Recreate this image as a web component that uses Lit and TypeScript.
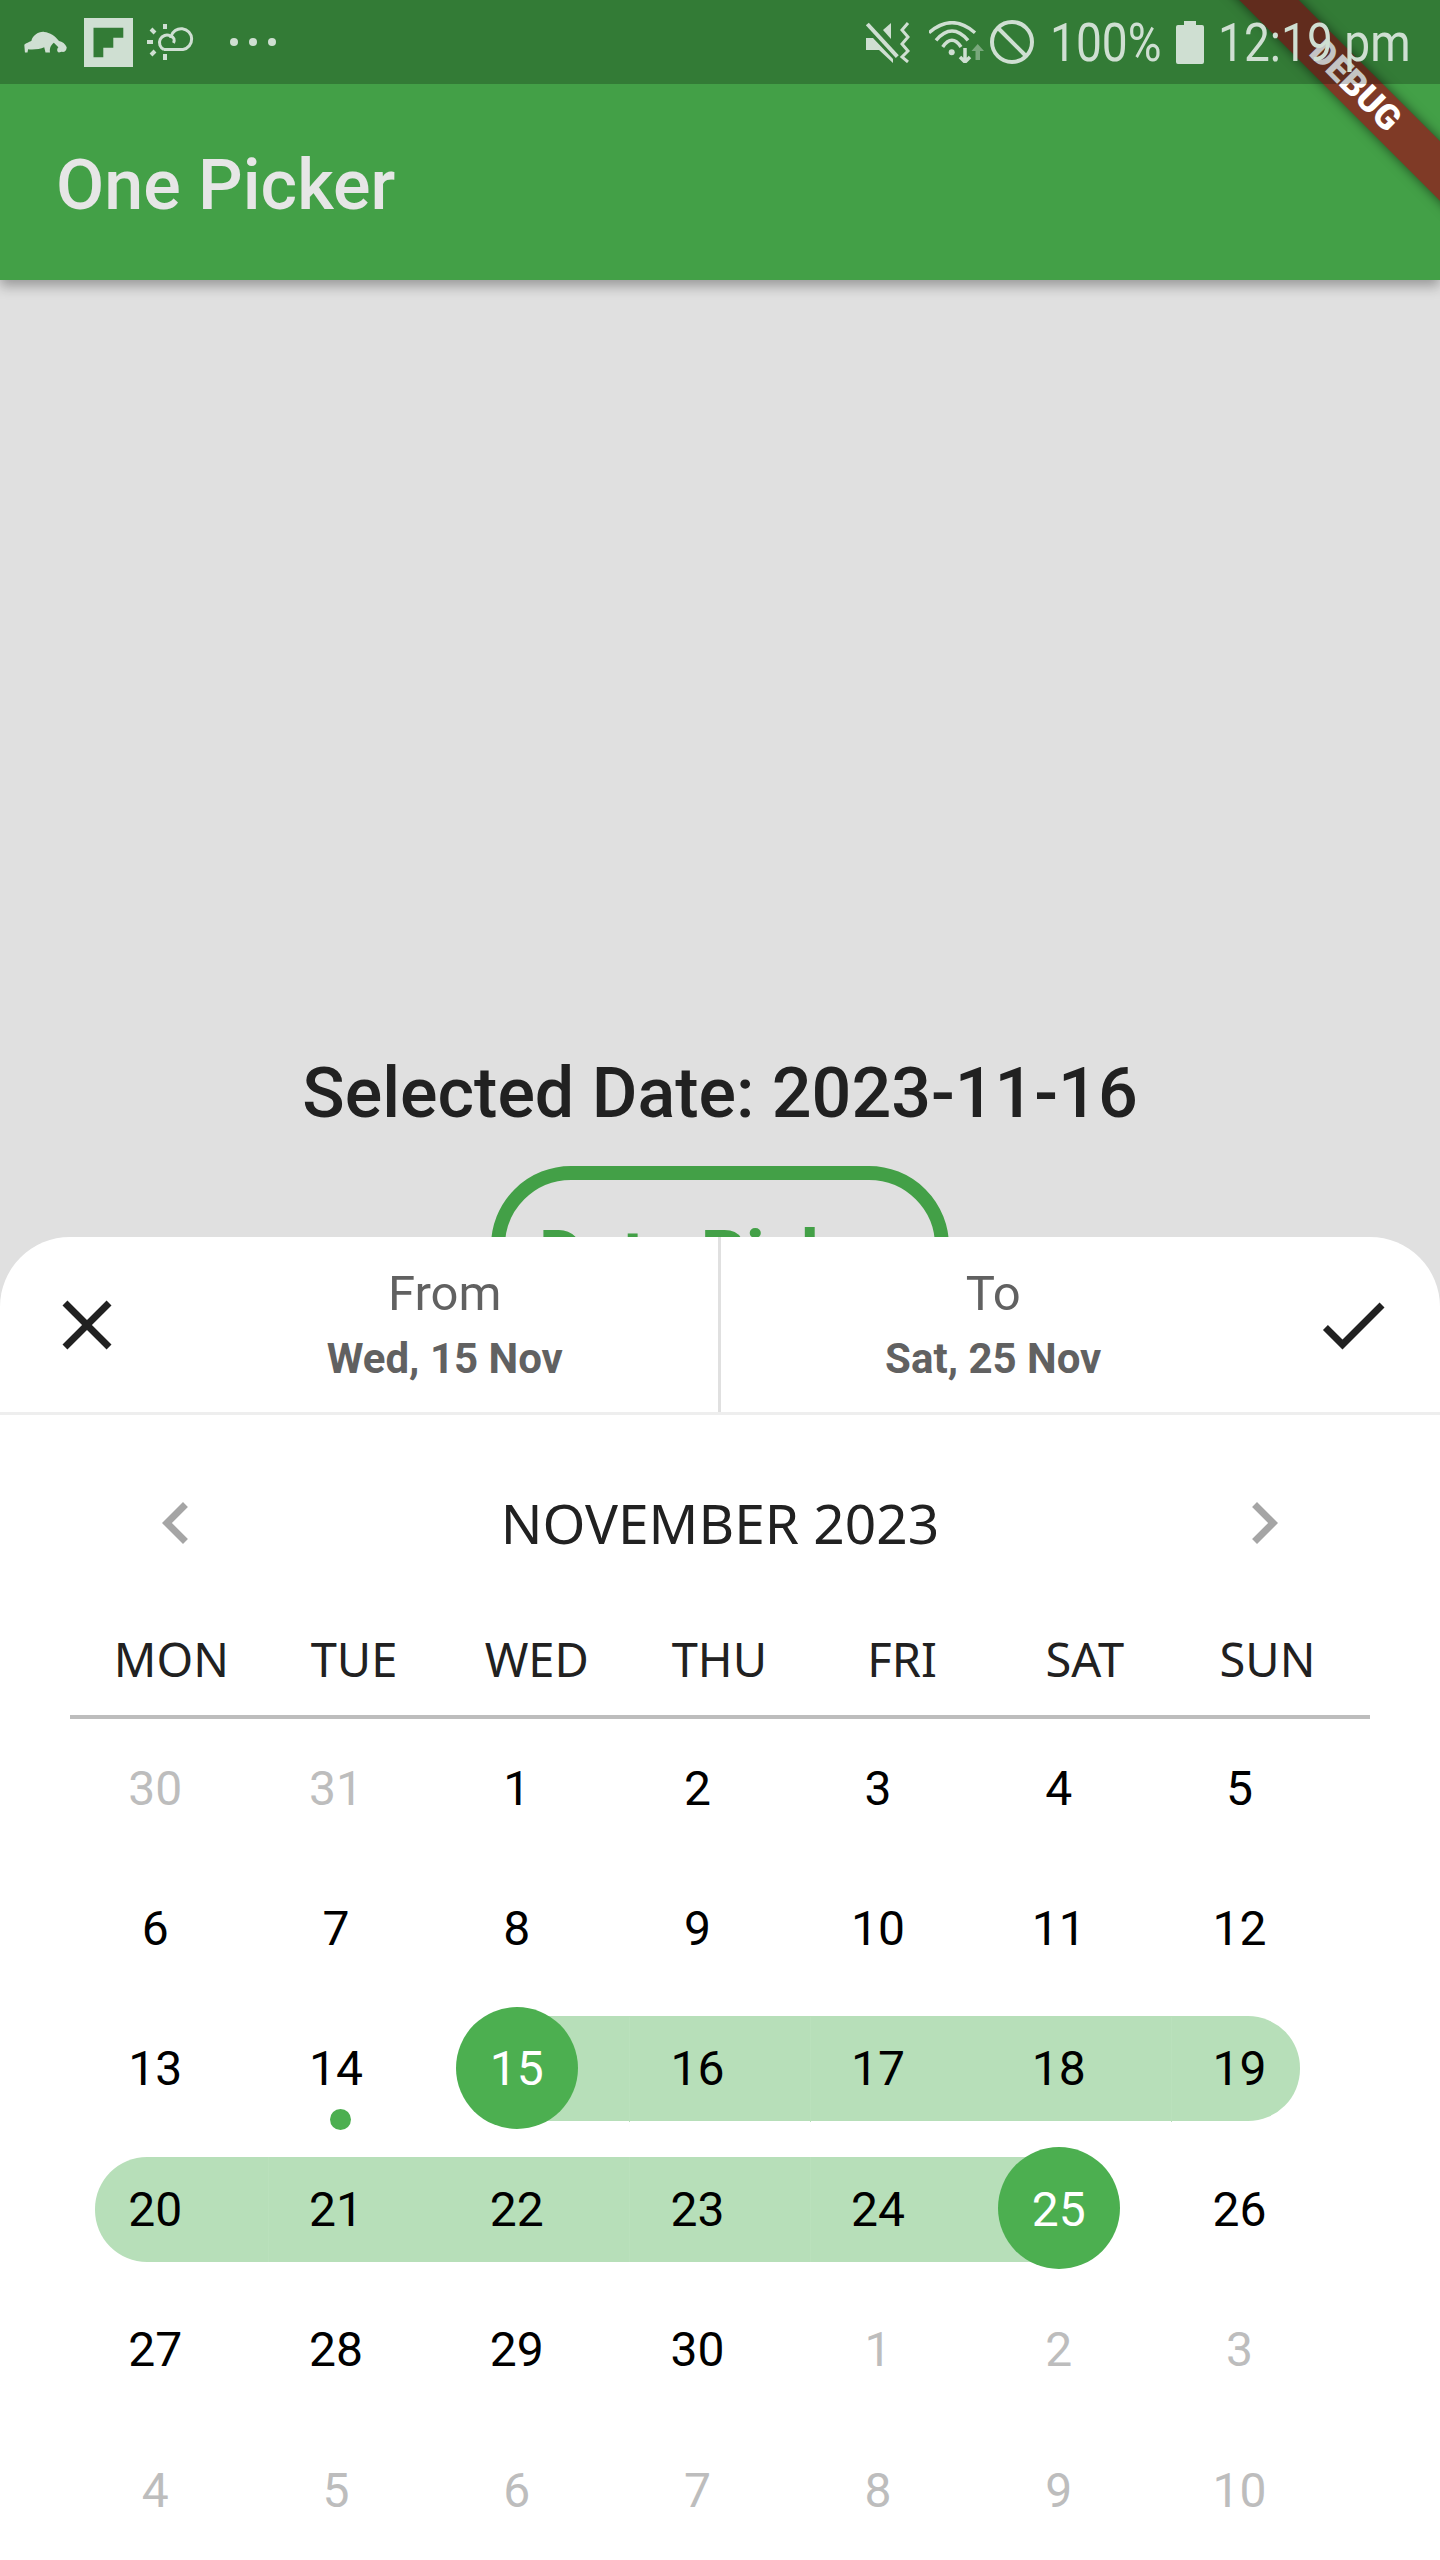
import { LitElement, css, html, svg } from "lit";
import { customElement } from "lit/decorators.js";

type Day = { label: number; muted?: boolean; edge?: boolean; seam?: boolean; dot?: boolean };
type Band = { column: string; cls: string };

const WEEKDAYS = ["MON", "TUE", "WED", "THU", "FRI", "SAT", "SUN"];

const week = (days: number[], muted: (i: number) => boolean = () => false): Day[] =>
  days.map((label, i) => ({ label, muted: muted(i) }));

const WEEKS: { days: Day[]; band?: Band }[] = [
  { days: week([30, 31, 1, 2, 3, 4, 5], (i) => i < 2) },
  { days: week([6, 7, 8, 9, 10, 11, 12]) },
  {
    days: [
      { label: 13 },
      { label: 14, dot: true },
      { label: 15, edge: true },
      { label: 16, seam: true },
      { label: 17, seam: true },
      { label: 18 },
      { label: 19, seam: true },
    ],
    band: { column: "3 / 8", cls: "band start" },
  },
  {
    days: [
      { label: 20 },
      { label: 21, seam: true },
      { label: 22 },
      { label: 23, seam: true },
      { label: 24, seam: true },
      { label: 25, edge: true },
      { label: 26 },
    ],
    band: { column: "1 / 7", cls: "band end" },
  },
  { days: week([27, 28, 29, 30, 1, 2, 3], (i) => i > 3) },
  { days: week([4, 5, 6, 7, 8, 9, 10], () => true) },
];

const icon = (d: string, cls: string) =>
  html`<svg class=${cls} viewBox="0 0 24 24"><path d=${d}></path></svg>`;

@customElement("app-root")
export class AppRoot extends LitElement {
  static styles = css`
    :host {
      display: block;
      position: relative;
      width: 1440px;
      height: 2560px;
      overflow: hidden;
      background: #e0e0e0;
      font-family: Roboto, "Liberation Sans", sans-serif;
    }

    .top {
      background: #43a047;
      box-shadow: 0 6px 12px rgba(0, 0, 0, 0.32);
    }

    .status {
      position: relative;
      z-index: 3;
      display: flex;
      align-items: center;
      height: 84px;
      padding: 0 28px 0 23px;
      box-sizing: border-box;
      background: rgba(0, 0, 0, 0.23);
      color: #cfdfd2;
    }

    .status svg {
      display: block;
      flex: none;
      fill: #cfdfd2;
    }

    .pray { width: 45px; height: 23px; margin: 1px 16px 0 0; }
    .flip { width: 49px; height: 49px; margin: 1px 14px 0 0; }
    .sun { width: 48px; height: 36px; margin: 0 35px 0 0; }
    .more { width: 46px; height: 8px; }
    .mute { width: 45px; height: 41px; margin: 1px 19px 0 auto; }
    .wifi { width: 55px; height: 42px; margin: 0 6px 0 0; }
    .block { width: 44px; height: 44px; margin: 0 16px 0 0; }
    .batt { width: 28px; height: 43px; margin: 0 14px 0 16px; }

    .status-text {
      display: block;
      flex: none;
      padding-top: 2px;
      font-size: 53px;
      line-height: 82px;
      white-space: nowrap;
      transform: scaleX(0.87);
      transform-origin: left center;
    }

    .pct { width: 110px; }
    .time { width: 194px; }

    .toolbar {
      display: flex;
      align-items: center;
      height: 196px;
      padding: 6px 0 0 56px;
      box-sizing: border-box;
      font-size: 70px;
      font-weight: 500;
      color: #e6e6e6;
    }

    .banner {
      position: absolute;
      z-index: 2;
      left: 1155px;
      top: 65px;
      width: 400px;
      height: 42px;
      transform: rotate(45deg);
      background: #7f3a26;
      box-shadow: 0 0 12px rgba(0, 0, 0, 0.55);
      color: #fff;
      font-size: 35px;
      font-weight: 900;
      line-height: 42px;
      text-align: center;
    }

    .content {
      display: flex;
      flex-direction: column;
      align-items: center;
      padding-top: 773px;
    }

    .selected {
      font-size: 70px;
      font-weight: 500;
      line-height: 80px;
      color: #212121;
    }

    .picker {
      display: flex;
      align-items: center;
      justify-content: center;
      box-sizing: border-box;
      width: 458px;
      height: 180px;
      margin-top: 33px;
      border: 14px solid #43a047;
      border-radius: 80px;
      font-size: 70px;
      font-weight: 700;
      color: #43a047;
    }

    .sheet {
      position: absolute;
      z-index: 1;
      left: 0;
      right: 0;
      bottom: 0;
      height: 1323px;
      background: #fff;
      border-radius: 70px 70px 0 0;
    }

    .head {
      display: flex;
      align-items: center;
      height: 178px;
      padding: 0 45px;
      box-sizing: border-box;
      border-bottom: 3px solid #eeeeee;
    }

    .head svg {
      display: block;
      flex: none;
      width: 84px;
      height: 84px;
      fill: #212121;
    }

    .range {
      flex: 1;
      display: flex;
      flex-direction: column;
      align-items: center;
      align-self: stretch;
      margin-right: 45px;
      color: #616161;
    }

    .range.from {
      margin: 0 0 0 43px;
      border-right: 3px solid #e0e0e0;
    }

    .range-label {
      margin-top: 27px;
      font-size: 49px;
      line-height: 60px;
    }

    .range-date {
      margin-top: 8px;
      font-size: 42px;
      font-weight: 700;
      line-height: 54px;
    }

    .nav {
      display: flex;
      align-items: center;
      justify-content: space-between;
      height: 84px;
      margin: 65px 134px 0;
      font-family: "Noto Sans", "Open Sans", sans-serif;
      font-size: 55px;
      color: #212121;
    }

    .nav svg {
      display: block;
      width: 84px;
      height: 84px;
      margin-top: 2px;
      fill: #a5a5a5;
    }

    .weekdays {
      display: grid;
      grid-template-columns: repeat(7, 182.7px);
      margin: 62px 70px 0;
      padding: 0 10px 23px;
      border-bottom: 4px solid #bdbdbd;
      font-family: "Noto Sans", "Open Sans", sans-serif;
      font-size: 47px;
      line-height: 66px;
      text-align: center;
      color: #212121;
    }

    .days {
      margin: -1px 0 0 65px;
    }

    .row {
      display: grid;
      grid-template-columns: repeat(7, 180.7px);
      grid-template-rows: 140.4px;
      width: 1265px;
    }

    .band {
      grid-row: 1;
      align-self: center;
      height: 105px;
      background: #b7dfb9;
    }

    .band.start {
      margin: 0 30px 0 90px;
      border-radius: 0 52px 52px 0;
    }

    .band.end {
      margin: 0 90px 0 30px;
      border-radius: 52px 0 0 52px;
    }

    .cell {
      grid-row: 1;
      position: relative;
      display: flex;
      align-items: center;
      justify-content: center;
      font-size: 48px;
      color: #000;
    }

    .cell.muted {
      color: #bdbdbd;
    }

    .cell.seam::before {
      content: "";
      position: absolute;
      left: 22px;
      top: 18px;
      width: 1px;
      height: 105px;
      background: #bae1bc;
    }

    .num {
      position: relative;
    }

    .cell.edge::after {
      content: "";
      position: absolute;
      left: 30px;
      top: 8px;
      width: 122px;
      height: 122px;
      border-radius: 50%;
      background: #4caf50;
    }

    .cell.edge {
      color: #fff;
    }

    .cell.edge .num {
      z-index: 1;
    }

    .dot {
      position: absolute;
      left: calc(50% - 6px);
      bottom: 9px;
      width: 21px;
      height: 21px;
      border-radius: 50%;
      background: #4caf50;
    }
  `;

  private statusLeft() {
    return html`
      <svg class="pray" viewBox="0 0 140 70">
        <path d="M4 42C10 36 18 34 26 30C30 14 48 0 66 2C84 4 100 14 112 30C122 32 132 38 136 50C136 62 128 66 120 64L112 66C106 66 104 56 110 50L96 36C88 42 82 52 84 66L70 66L66 50C54 56 30 58 16 56L14 66L6 66Z"></path>
      </svg>
      <svg class="flip" viewBox="0 0 49 49">
        <path fill-rule="evenodd" d="M0 0H49V49H0ZM9.5 9.7V39.3H19.3V29.7H29.3V19.7H39.3V9.700Z"></path>
      </svg>
      <svg class="sun" viewBox="0 0 48 36" style="fill:none;stroke:#cfdfd2;stroke-width:3">
        <path d="M17 25.5H36A10.5 10.5 0 1 0 24 12.5C27 13 28 16 26.5 19"></path>
        <path d="M23.5 12A7.5 7.5 0 1 0 17 25.5"></path>
        <path stroke-width="4" d="M18 0V5M0 18H6M4 5L8 9M4 31L8 27M18 30V36"></path>
      </svg>
      <svg class="more" viewBox="0 0 46 8">
        <circle cx="4" cy="4" r="4"></circle>
        <circle cx="23" cy="4" r="4"></circle>
        <circle cx="42" cy="4" r="4"></circle>
      </svg>
    `;
  }

  private statusRight() {
    return html`
      <svg class="mute" viewBox="0 0 45 41">
        <path d="M1 16H8L28 37V41L14 28H1Z"></path>
        <path d="M18 8L26 1V17Z"></path>
        <path d="M2.300 2L32.300 34.700" fill="none" stroke="#cfdfd2" stroke-width="4"></path>
        <path d="M43 1L37 8L43 15L37 22L43 29L37 35L43 40" fill="none" stroke="#cfdfd2" stroke-width="3"></path>
      </svg>
      <svg class="wifi" viewBox="0 0 55 42">
        ${svg`<g fill="none" stroke="#cfdfd2" stroke-width="3.5">
          <path d="M0 11.700Q23 -8.300 46 11.700"></path>
          <path d="M7 19.300Q23 0.700 39 19.300"></path>
          <path d="M13.700 26Q23 12.600 32 26"></path>
          <path d="M36 27V41M31 36L36 41L41 36"></path>
        </g>
        <circle cx="22.700" cy="31.300" r="3"></circle>
        <path d="M48.700 23L55 30H51V39H46.500V30H42.500Z" opacity="0.45"></path>`}
      </svg>
      <svg class="block" viewBox="0 0 44 44">
        <circle cx="22" cy="22" r="20" fill="none" stroke="#cfdfd2" stroke-width="4"></circle>
        <path d="M8 8L36 36" fill="none" stroke="#cfdfd2" stroke-width="4"></path>
      </svg>
      <span class="status-text pct">100%</span>
      <svg class="batt" viewBox="0 0 28 43">
        <path d="M8 0H20V4H26A2 2 0 0 1 28 6V41A2 2 0 0 1 26 43H2A2 2 0 0 1 0 41V6A2 2 0 0 1 2 4H8Z"></path>
      </svg>
      <span class="status-text time">12:19 pm</span>
    `;
  }

  private renderDay(day: Day, index: number) {
    const cls = ["cell", day.muted ? "muted" : "", day.edge ? "edge" : "", day.seam ? "seam" : ""].join(" ");
    return html`<div class=${cls} style="grid-column:${index + 1}">
      <span class="num">${day.label}</span>
      ${day.dot ? html`<span class="dot"></span>` : ""}
    </div>`;
  }

  render() {
    return html`
      <div class="top">
        <div class="status">${this.statusLeft()}${this.statusRight()}</div>
        <div class="toolbar">One Picker</div>
      </div>
      <div class="banner">DEBUG</div>
      <div class="content">
        <div class="selected">Selected Date: 2023-11-16</div>
        <div class="picker">Date Picker</div>
      </div>
      <div class="sheet">
        <div class="head">
          ${icon("M19 6.41L17.59 5 12 10.59 6.410 5 5 6.41 10.59 12 5 17.59 6.41 19 12 13.41 17.59 19 19 17.59 13.41 12z", "close")}
          <div class="range from">
            <span class="range-label">From</span>
            <span class="range-date">Wed, 15 Nov</span>
          </div>
          <div class="range">
            <span class="range-label">To</span>
            <span class="range-date">Sat, 25 Nov</span>
          </div>
          ${icon("M9 16.17L4.83 12l-1.41 1.41L9 19 21 7l-1.41-1.41z", "check")}
        </div>
        <div class="nav">
          ${icon("M15.41 7.41L14 6l-6 6 6 6 1.41-1.41L10.83 12z", "prev")}
          <span>NOVEMBER 2023</span>
          ${icon("M10 6L8.59 7.41 13.17 12l-4.58 4.58L10 18l6-6z", "next")}
        </div>
        <div class="weekdays">${WEEKDAYS.map((d) => html`<span>${d}</span>`)}</div>
        <div class="days">
          ${WEEKS.map(
            (w) => html`<div class="row">
              ${w.band ? html`<div class=${w.band.cls} style="grid-column:${w.band.column}"></div>` : ""}
              ${w.days.map((d, i) => this.renderDay(d, i))}
            </div>`
          )}
        </div>
      </div>
    `;
  }
}

declare global {
  interface HTMLElementTagNameMap {
    "app-root": AppRoot;
  }
}
